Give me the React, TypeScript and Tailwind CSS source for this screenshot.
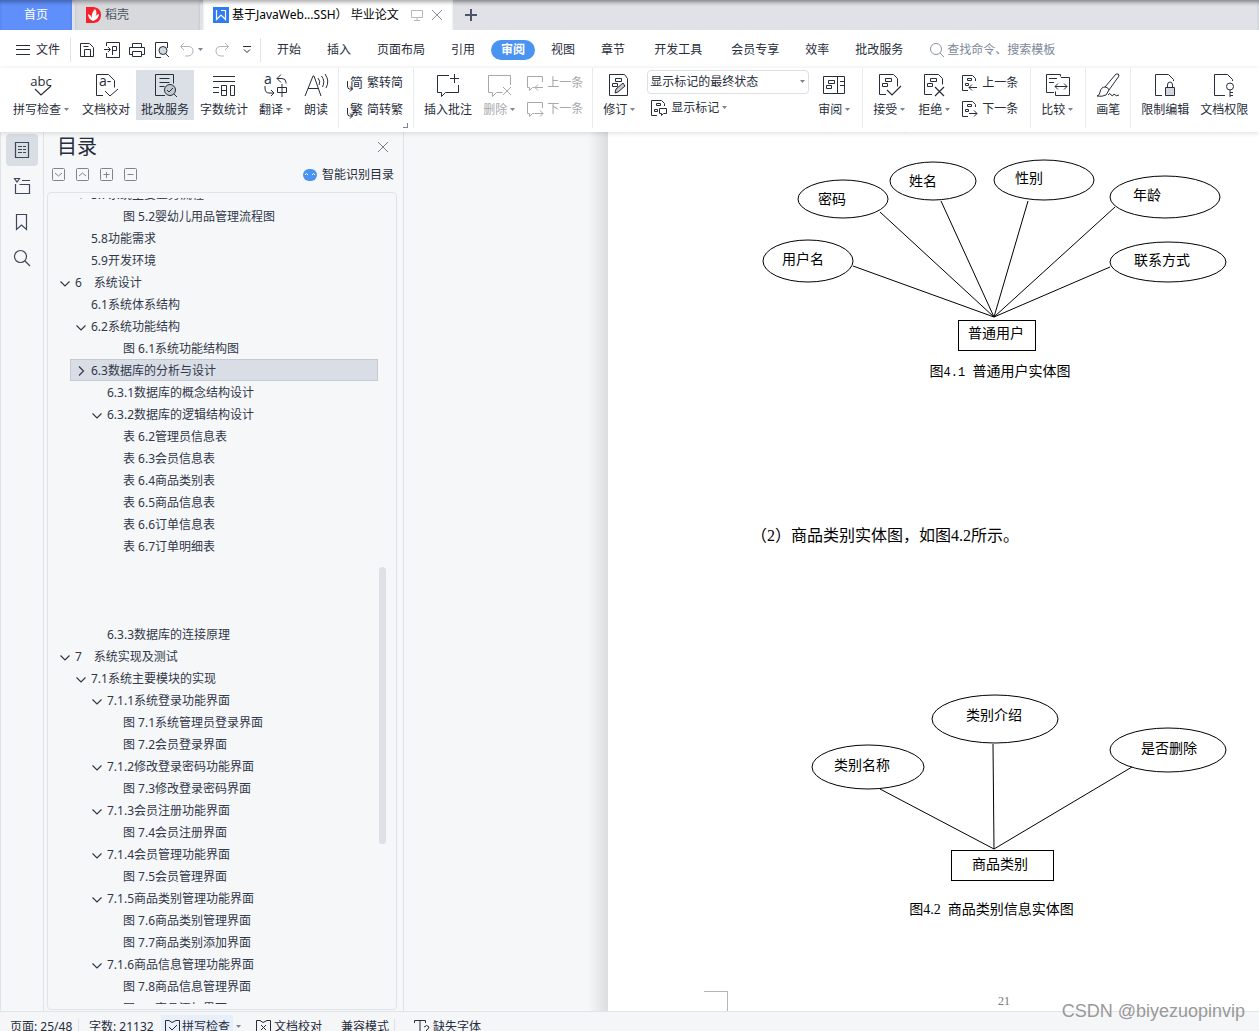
import React from "react";

type P = { children?: React.ReactNode; size?: number; className?: string };

function Ico({ children, size = 24, className = "" }: P) {
  return (
    <svg
      width={size}
      height={size}
      viewBox={`0 0 ${size} ${size}`}
      fill="none"
      stroke="currentColor"
      strokeWidth="1"
      aria-hidden="true"
      className={`shrink-0 overflow-visible ${className}`}
    >
      {children}
    </svg>
  );
}

const glyph = { fill: "currentColor", stroke: "none", fontFamily: '"Open Sans","Noto Sans CJK SC",sans-serif' };

const Spell = () => (
  <Ico>
    <text x="11" y="13" fontSize="13" textAnchor="middle" {...glyph}>abc</text>
    <path d="M5 16l6 6 10-9" strokeWidth="1.2" />
  </Ico>
);
const Proof = () => (
  <Ico>
    <path d="M9 22.500H2.500V1.500h12l6 6v7M11 18l5 5 8-7" />
    <text x="5" y="13" fontSize="14" {...glyph}>a-</text>
  </Ico>
);
const Correct = () => (
  <Ico>
    <path d="M12 22.500H2.500V1.500h18v9M6.500 5.500h10M6.500 9.500h10M6.500 13.500h5" />
    <circle cx="17" cy="17" r="5.500" fill="#c3c9d1" />
    <path d="M14 17l2 2 4-4M21 21l3 3" />
  </Ico>
);
const Count = () => (
  <Ico>
    <path d="M1 3.500h22M1 8.500h22M1 14.500h6M1 19.500h6M9.500 12.500h5v10h-5zM9.500 17.500h5M18.500 12.500h4v10h-4z" />
  </Ico>
);
const Translate = () => (
  <Ico>
    <text x="0" y="11" fontSize="14" {...glyph}>a</text>
    <path d="M13 5.500h5q4 0 4 4v1M17 1.500l-4 4 4 4M1 13v2q0 5 4 5h5M7 17l3 3-3 3M13.500 14.500h9v5h-9zM18 11v13" />
  </Ico>
);
const Read = () => (
  <Ico>
    <path d="M1 23L9 3h1l7 20M4 15.500h10.500M14 5q3 3 1 7M17.500 3q4 5 1 11M21 1q5 7 1 14" />
  </Ico>
);
const SmallCjk = ({ c }: { c: string }) => (
  <Ico size={16}>
    <text x="3" y="12" fontSize="13" {...glyph}>{c}</text>
    <path d="M.500 6v5q0 3 2 3h3M3 11.500L5.500 14 3 16.500" />
  </Ico>
);
const AddNote = () => (
  <Ico>
    <path d="M13 2.500H1.500v17h4v4l4-4h13V12M18.500 1v9M14 5.500h9" />
  </Ico>
);
const DelNote = () => (
  <Ico>
    <path d="M22.500 12V2.500H.500v17h4v4l4-4h6M15 14l8 8M23 14l-8 8" />
  </Ico>
);
const NoteArrow = ({ next }: { next?: boolean }) => (
  <Ico size={16}>
    <path d="M15.500 7V1.500H.500v11h2v3l3-3h2" />
    <path d={next ? "M8 12.500h8M13 9.500l3 3-3 3" : "M16 12.500H8M11 9.500l-3 3 3 3"} />
  </Ico>
);
const Revise = () => (
  <Ico>
    <path d="M1.500 1.500h15l3 4v17h-18zM7.500 5.500h6v3h-6zM4.500 10.500h5v3h-5z" />
    <path d="M7 20l1-4 7-6 2 3-7 6z" fill="#c3c9d1" />
  </Ico>
);
const ShowMarks = () => (
  <Ico size={16}>
    <path d="M6 15.500H.500V.500h10l3 3V6M5.500 3.500h4v2h-4zM3.500 9.500h3v2h-3zM8.500 8.500h7v5h-3l-2 2v-2h-2z" />
  </Ico>
);
const Pane = () => (
  <Ico>
    <path d="M.500 3.500h21v17H.500zM14.500 3.500v17M5.500 7.500h6v3h-6zM3.500 12.500h5v3h-5zM17 8.500h4M17 12.500h4" />
  </Ico>
);
const Accept = () => (
  <Ico>
    <path d="M8 21.500H1.500V1.500h14l4 4v8M7.500 5.500h6v3h-6zM4.500 10.500h5v3h-5z" />
    <path d="M9 17l5 5 9-9" strokeWidth="1.2" />
  </Ico>
);
const Reject = () => (
  <Ico>
    <path d="M9 21.500H1.500V1.500h14l4 4v6M7.500 5.500h6v3h-6zM4.500 10.500h5v3h-5z" />
    <path d="M12 14l9 9M21 14l-9 9" strokeWidth="1.2" />
  </Ico>
);
const RevArrow = ({ next }: { next?: boolean }) => (
  <Ico size={16}>
    <path d="M6 15.500H.500V.500h10l3 3V6M5.500 3.500h4v2h-4zM3.500 8.500h3v2h-3z" />
    <path d={next ? "M7 12.500h8M12 9.500l3 3-3 3" : "M15 12.500H7M10 9.500l-3 3 3 3"} />
  </Ico>
);
const Compare = () => (
  <Ico>
    <path d="M8 19.500H.500V1.500h14v2M3 5.500h8M3 9.500h5M15 4.500h8.500v18H9.500v-4M9 13.500h12M12 10.500l-3 3 3 3M18 10.500l3 3-3 3" />
  </Ico>
);
const Pen = () => (
  <Ico>
    <path d="M9 14L20 1q3-1 3 2L13 17M9 14q3 0 4 3l-3 5q-4 2-9 1 3-1 3-4 1-5 5-5zM12 22q2-3 3 0 2 2 3-1 2 3 5 1" />
  </Ico>
);
const Lock = () => (
  <Ico>
    <path d="M9 22.500H2.500V1.500h13l5 5V8" />
    <path d="M12.500 14.500h9v8h-9z" fill="#d3d7dc" />
    <path d="M14.500 14v-2q0-3 2.500-3t2.500 3v2" />
  </Ico>
);
const Key = () => (
  <Ico>
    <path d="M13 22.500H2.500V1.500h13l5 5V8M18 17v7M18 19.500h3M18 22.500h3" />
    <circle cx="18" cy="13.500" r="3.500" />
  </Ico>
);

const Caret = () => (
  <svg width="8" height="6" viewBox="0 0 8 6" aria-hidden="true" className="ml-0.5 shrink-0 fill-[#7b8496]">
    <path d="M1 1h5L3.500 4z" />
  </svg>
);

function Big({ icon, label, caret, active, disabled }: { icon: React.ReactNode; label: string; caret?: boolean; active?: boolean; disabled?: boolean }) {
  return (
    <button
      type="button"
      disabled={disabled}
      className={`flex h-[50px] shrink-0 flex-col items-center gap-[5px] px-[5px] pt-[3px] ${active ? "bg-[#dbe0e6]" : ""} ${disabled ? "text-[#a6a8ac]" : ""}`}
    >
      {icon}
      <span className="flex items-center leading-4">
        {label}
        {caret && <Caret />}
      </span>
    </button>
  );
}

function Small({ icon, label, caret, disabled }: { icon: React.ReactNode; label: string; caret?: boolean; disabled?: boolean }) {
  return (
    <button type="button" disabled={disabled} className={`flex h-[26px] items-center gap-1 whitespace-nowrap ${disabled ? "text-[#a6a8ac]" : ""}`}>
      {icon}
      <span className="flex items-center">
        {label}
        {caret && <Caret />}
      </span>
    </button>
  );
}

const Group = ({ children, className = "px-[5px]" }: P) => (
  <div className={`flex shrink-0 gap-px border-r border-[#e8eaed] pt-0.5 ${className}`}>{children}</div>
);

function TabBar() {
  return (
    <div className="flex h-[30px] shrink-0 bg-[#e1e2e7] shadow-[inset_0_4px_4px_-2px_rgba(0,0,0,0.45)]">
      <button type="button" className="mr-[3px] w-[72px] bg-[#5f8ffa] text-white shadow-[inset_0_4px_4px_-2px_rgba(0,0,0,0.35)]">首页</button>
      <button type="button" className="mr-[3px] flex w-[125px] items-center gap-1 bg-[#d8d9dc] pl-[11px] text-[#4b5160] shadow-[inset_0_4px_4px_-2px_rgba(0,0,0,0.35)]">
        <svg width="15" height="16" viewBox="0 0 15 16" aria-hidden="true">
          <path d="M0 0h8q7 1 7 8t-7 8H0z" fill="#f5222d" />
          <path d="M7 14Q2 12 2 7q3 1 4 4Q5 6 9 2q3 4 0 8 2-3 4-3 0 5-6 7z" fill="#fff" />
        </svg>
        稻壳
      </button>
      <div className="flex w-[250px] items-center bg-white pl-[10px] text-black shadow-[inset_0_4px_4px_-2px_rgba(0,0,0,0.35)]">
        <svg width="16" height="16" viewBox="0 0 16 16" aria-hidden="true" className="mr-[3px] shrink-0">
          <rect width="16" height="16" fill="#2f7bf0" />
          <path d="M3.500 3v9.500L8 8l4.500 4.500v-9H8" fill="none" stroke="#fff" strokeWidth="1.200" />
        </svg>
        <span className="w-[175px] shrink-0 whitespace-pre">基于JavaWeb...SSH） 毕业论文</span>
        <Ico size={12} className="ml-1 text-[#b3b8c4]"><path d="M.500 1.500h11v7H.500zM6 8v3M3 11.500h6" /></Ico>
        <button type="button" aria-label="关闭标签" className="ml-2 text-[#8b93a3]"><Ico size={12}><path d="M1 1l10 10M11 1L1 11" /></Ico></button>
      </div>
      <button type="button" aria-label="新建标签" className="ml-3 text-[#4b566d]">
        <Ico size={12}><path d="M6 0v12M0 6h12" strokeWidth="2" /></Ico>
      </button>
    </div>
  );
}

const menus = [
  ["开始", ""], ["插入", ""], ["页面布局", ""], ["引用", ""], ["审阅", "on"], ["视图", ""], ["章节", "gap"],
  ["开发工具", "gap"], ["会员专享", ""], ["效率", ""], ["批改服务", ""],
];

function MenuBar() {
  return (
    <div className="flex h-[38px] shrink-0 items-center bg-white pt-0.5">
      <button type="button" className="flex items-center gap-1.5 pl-4">
        <Ico size={14}><path d="M0 2.500h14M0 6.500h14M0 11.500h14" /></Ico>
        文件
      </button>
      <div className="ml-[10px] h-6 w-px bg-[#dfe2e6]" />
      <div className="ml-2 flex items-center gap-[9px]">
        <button type="button" aria-label="保存"><Ico size={16}><path d="M1.500 1.500h9l4 4v9h-13zM5.500 14.500V7.500h6v7M4.500 4.500h5" /></Ico></button>
        <button type="button" aria-label="输出为PDF"><Ico size={16}><path d="M2.500 4V.500h13v15h-13V11M0 7.500h6M4 5l2.500 2.500L4 10M8.500 13V4.500h4v4h-4" /></Ico></button>
        <button type="button" aria-label="打印"><Ico size={16}><path d="M3.500 5V1.500h9V5M3.500 12.500h-3v-7h15v7h-3M3.500 9.500h9v5h-9z" /></Ico></button>
        <button type="button" aria-label="打印预览"><Ico size={16}><path d="M7 15.500H1.500V.500h12V6" /><circle cx="9" cy="8.500" r="4" fill="#d3d8de" /><path d="M12 12l3 3" /></Ico></button>
        <button type="button" aria-label="撤销" className="flex items-center text-[#b3b5b9]"><Ico size={16}><path d="M5 1L1.500 4.500 5 8M2 4.500h7q5 0 5 4.500t-5 5H6" /></Ico><Caret /></button>
        <button type="button" aria-label="恢复" className="text-[#b3b5b9]"><Ico size={16}><path d="M11 1l3.500 3.500L11 8M14 4.500H7Q2 4.500 2 9t5 5h3" /></Ico></button>
        <button type="button" aria-label="更多快捷工具"><Ico size={16}><path d="M4 4.500h8M5 7.500l3 3 3-3" /></Ico></button>
      </div>
      <div className="ml-[5px] h-6 w-px bg-[#dfe2e6]" />
      <nav className="ml-[3px] flex items-center">
        {menus.map(([m, k]) =>
          k === "on" ? (
            <button key={m} type="button" className="mx-[3px] h-5 rounded-full bg-[#4a93f0] px-2.5 font-bold text-white">{m}</button>
          ) : (
            <button key={m} type="button" className={k === "gap" ? "mr-[3px] px-[13px]" : "px-[13px]"}>{m}</button>
          )
        )}
      </nav>
      <label className="ml-[13px] flex min-w-0 items-center gap-0.5 text-[#8b94a5]">
        <Ico size={16}><circle cx="7" cy="7" r="5.500" /><path d="M11 11l4 4" /></Ico>
        <input aria-label="查找命令、搜索模板" placeholder="查找命令、搜索模板" className="w-32 min-w-0 bg-transparent outline-none placeholder:text-[#7d8799]" />
      </label>
    </div>
  );
}

function Ribbon() {
  return (
    <div className="relative z-10 flex h-16 shrink-0 bg-white pb-1 shadow-[0_1px_5px_rgba(0,0,0,0.14)]">
      <Group className="pl-2 pr-[5px]">
        <Big icon={<Spell />} label="拼写检查" caret />
        <Big icon={<Proof />} label="文档校对" />
        <Big icon={<Correct />} label="批改服务" active />
        <Big icon={<Count />} label="字数统计" />
        <Big icon={<Translate />} label="翻译" caret />
        <Big icon={<Read />} label="朗读" />
      </Group>
      <Group className="relative flex-col pl-2 pr-[10px]">
        <Small icon={<SmallCjk c="简" />} label="繁转简" />
        <Small icon={<SmallCjk c="繁" />} label="简转繁" />
        <span className="absolute bottom-0 right-[5px] size-[5px] border-b border-r border-[#7b8496]" />
      </Group>
      <Group className="pl-[5px] pr-[9px]">
        <Big icon={<AddNote />} label="插入批注" />
        <Big icon={<DelNote />} label="删除" caret disabled />
        <div className="ml-1 flex flex-col">
          <Small icon={<NoteArrow />} label="上一条" disabled />
          <Small icon={<NoteArrow next />} label="下一条" disabled />
        </div>
      </Group>
      <Group>
        <Big icon={<Revise />} label="修订" caret />
        <div className="ml-1 mr-[3px] flex w-[162px] flex-col gap-px">
          <div className="relative">
            <select aria-label="显示状态" className="h-6 w-full appearance-none rounded-sm border border-[#dcdfe4] bg-white pl-0.5 outline-none">
              <option>显示标记的最终状态</option>
            </select>
            <span className="pointer-events-none absolute right-0.5 top-[9px]"><Caret /></span>
          </div>
          <div className="pl-1"><Small icon={<ShowMarks />} label="显示标记" caret /></div>
        </div>
        <Big icon={<Pane />} label="审阅" caret />
      </Group>
      <Group className="pl-[5px] pr-[12px]">
        <Big icon={<Accept />} label="接受" caret />
        <Big icon={<Reject />} label="拒绝" caret />
        <div className="ml-1 flex flex-col">
          <Small icon={<RevArrow />} label="上一条" />
          <Small icon={<RevArrow next />} label="下一条" />
        </div>
      </Group>
      <Group><Big icon={<Compare />} label="比较" caret /></Group>
      <Group><Big icon={<Pen />} label="画笔" /></Group>
      <div className="flex gap-px pl-[5px] pt-0.5">
        <Big icon={<Lock />} label="限制编辑" />
        <Big icon={<Key />} label="文档权限" />
      </div>
    </div>
  );
}

function Rail() {
  return (
    <aside className="flex w-11 shrink-0 flex-col items-center gap-1 border-x border-[#e0e3e8] pt-0.5 text-[#3d475c]">
      <button type="button" aria-label="目录" className="flex size-8 items-center justify-center rounded-sm bg-[#d9dde4]">
        <Ico size={16}><path d="M1.500.500h13v15h-13zM4 4.500h4M9 4.500h3M4 7.500h4M9 7.500h3M4 10.500h4M9 10.500h3" strokeWidth="1.2" /></Ico>
      </button>
      <button type="button" aria-label="章节导航" className="flex size-8 items-center justify-center">
        <Ico size={16}><path d="M.500.500h5L3 4zM8 2.500h8M1.500 6v9.500h14v-9H5.500" strokeWidth="1.2" /></Ico>
      </button>
      <button type="button" aria-label="书签" className="flex size-8 items-center justify-center">
        <Ico size={16}><path d="M2.500.500h10v15L7.500 11l-5 4.500z" strokeWidth="1.2" /></Ico>
      </button>
      <button type="button" aria-label="查找" className="flex size-8 items-center justify-center">
        <Ico size={18}><circle cx="7.500" cy="7.500" r="6" strokeWidth="1.2" /><path d="M12 12l5 5" strokeWidth="1.2" /></Ico>
      </button>
    </aside>
  );
}

type Row = { l: number; t: string; open?: boolean; sel?: boolean };
const rows: Row[] = [
  { l: 2, t: "5.7系统主要业务流程", open: true },
  { l: 4, t: "图 5.2婴幼儿用品管理流程图" },
  { l: 2, t: "5.8功能需求" },
  { l: 2, t: "5.9开发环境" },
  { l: 1, t: "6\u2003系统设计", open: true },
  { l: 2, t: "6.1系统体系结构" },
  { l: 2, t: "6.2系统功能结构", open: true },
  { l: 4, t: "图 6.1系统功能结构图" },
  { l: 2, t: "6.3数据库的分析与设计", sel: true },
  { l: 3, t: "6.3.1数据库的概念结构设计" },
  { l: 3, t: "6.3.2数据库的逻辑结构设计", open: true },
  { l: 4, t: "表 6.2管理员信息表" },
  { l: 4, t: "表 6.3会员信息表" },
  { l: 4, t: "表 6.4商品类别表" },
  { l: 4, t: "表 6.5商品信息表" },
  { l: 4, t: "表 6.6订单信息表" },
  { l: 4, t: "表 6.7订单明细表" },
  { l: 4, t: "" },
  { l: 4, t: "" },
  { l: 4, t: "" },
  { l: 3, t: "6.3.3数据库的连接原理" },
  { l: 1, t: "7\u2003系统实现及测试", open: true },
  { l: 2, t: "7.1系统主要模块的实现", open: true },
  { l: 3, t: "7.1.1系统登录功能界面", open: true },
  { l: 4, t: "图 7.1系统管理员登录界面" },
  { l: 4, t: "图 7.2会员登录界面" },
  { l: 3, t: "7.1.2修改登录密码功能界面", open: true },
  { l: 4, t: "图 7.3修改登录密码界面" },
  { l: 3, t: "7.1.3会员注册功能界面", open: true },
  { l: 4, t: "图 7.4会员注册界面" },
  { l: 3, t: "7.1.4会员管理功能界面", open: true },
  { l: 4, t: "图 7.5会员管理界面" },
  { l: 3, t: "7.1.5商品类别管理功能界面", open: true },
  { l: 4, t: "图 7.6商品类别管理界面" },
  { l: 4, t: "图 7.7商品类别添加界面" },
  { l: 3, t: "7.1.6商品信息管理功能界面", open: true },
  { l: 4, t: "图 7.8商品信息管理界面" },
  { l: 4, t: "图 7.9商品添加界面" },
];
const indent = ["", "pl-[11px]", "pl-[27px]", "pl-[43px]", "pl-[59px]"];
const selIndent = "ml-[22px] mr-[18px] border border-[#c5cbd5] bg-[#d9dde5] pl-1";

function Outline() {
  return (
    <section className="flex w-[360px] shrink-0 flex-col border-r border-[#e0e3e8] pl-[3px] pr-[6px]">
      <div className="flex h-[30px] items-center justify-between pl-[10px] pr-2">
        <h2 className="text-[20px] leading-[30px] text-[#272d3b]">目录</h2>
        <button type="button" aria-label="关闭目录" className="text-[#7a7f8a]"><Ico size={12}><path d="M1 1l10 10M11 1L1 11" /></Ico></button>
      </div>
      <div className="flex h-[30px] items-center justify-between pb-1.5 pl-[3px] pr-[3px]">
        <div className="flex gap-2 text-[#7f848c]">
          {[["展开", "M5 7l3.500 3L12 7"], ["收起", "M5 10l3.500-3L12 10"], ["全部展开", "M8.500 6v6M5.500 8.500h6"], ["全部收起", "M5.500 8.500h6"]].map(([n, d]) => (
            <button key={n} type="button" aria-label={n}><Ico size={16}><rect x="2.500" y="2.500" width="12" height="12" rx="1" /><path d={d} /></Ico></button>
          ))}
        </div>
        <button type="button" className="flex items-center gap-[5px] pt-0.5">
          <svg width="14" height="14" viewBox="0 0 14 14" aria-hidden="true">
            <rect x="0" y="1" width="14" height="12" rx="6" fill="#4a93f0" />
            <path d="M2 7q1.500-3 3 0M9 7q1.500-3 3 0" stroke="#fff" fill="none" />
          </svg>
          智能识别目录
        </button>
      </div>
      <div className="relative mb-px min-h-0 flex-1 rounded-sm border border-[#e0e3e8] py-[5px]">
        <ul className="h-full overflow-hidden">
          {rows.map((r, i) => (
            <li key={i} className={`flex h-[22px] items-center whitespace-pre pt-0.5 text-[#313849] ${i === 0 ? "-mt-[15px]" : ""} ${r.sel ? selIndent : indent[r.l]}`}>
              <span className="flex w-4 shrink-0 items-center">
                {r.open && <Ico size={12}><path d="M1.500 4.500L6 9l4.500-4.500" strokeWidth="1.2" /></Ico>}
                {r.sel && <Ico size={12}><path d="M4 1.500L8.500 6 4 10.500" strokeWidth="1.2" /></Ico>}
              </span>
              {r.t}
            </li>
          ))}
        </ul>
        <div className="absolute right-[10px] top-[374px] h-[277px] w-[7px] rounded-full bg-[#dde0e4]" />
      </div>
    </section>
  );
}

type Node = { cx: number; cy: number; rx: number; ry: number; t: string; tx: number; ty: number };
const userNodes: Node[] = [
  { cx: 58, cy: 110, rx: 45, ry: 21, t: "用户名", tx: 53, ty: 113 },
  { cx: 93, cy: 48, rx: 45, ry: 19, t: "密码", tx: 82, ty: 53 },
  { cx: 183, cy: 30, rx: 43, ry: 19, t: "姓名", tx: 173, ty: 35 },
  { cx: 294, cy: 29, rx: 50, ry: 20, t: "性别", tx: 279, ty: 32 },
  { cx: 415, cy: 46, rx: 55, ry: 21, t: "年龄", tx: 397, ty: 49 },
  { cx: 418, cy: 111, rx: 58, ry: 20, t: "联系方式", tx: 412, ty: 114 },
];
const goodsNodes: Node[] = [
  { cx: 118, cy: 76, rx: 56, ry: 22, t: "类别名称", tx: 112, ty: 79 },
  { cx: 245, cy: 28, rx: 63, ry: 24, t: "类别介绍", tx: 244, ty: 29 },
  { cx: 418, cy: 59, rx: 58, ry: 22, t: "是否删除", tx: 419, ty: 62 },
];

function Diagram({ nodes, lines, box, label, h, title }: { nodes: Node[]; lines: string; box: number[]; label: number[]; h: number; title: string }) {
  return (
    <svg width="500" height={h} viewBox={`0 0 500 ${h}`} role="img" aria-label={title} fill="none" stroke="#000" strokeWidth="1" className="text-[14px]">
      <path d={lines} />
      {nodes.map((n) => (
        <g key={n.t}>
          <ellipse cx={n.cx} cy={n.cy} rx={n.rx} ry={n.ry} />
          <text x={n.tx} y={n.ty} textAnchor="middle" fill="#000" stroke="none">{n.t}</text>
        </g>
      ))}
      <rect x={box[0]} y={box[1]} width={box[2]} height={box[3]} shapeRendering="crispEdges" />
      <text x={label[0]} y={label[1]} textAnchor="middle" fill="#000" stroke="none">{title}</text>
    </svg>
  );
}

function Doc() {
  return (
    <main className="flex min-w-0 flex-1">
      <div className="w-[204px] shrink-0 bg-[linear-gradient(to_right,transparent_184px,#dcdddf)]" />
      <article className="min-w-0 flex-1 overflow-hidden bg-white font-['Liberation_Serif','Noto_Sans_CJK_SC',serif] text-black">
        <div className="flex h-full w-[642px] flex-col pl-[142px]">
          <p className="-mt-[19px] h-[20px] shrink-0 pl-px text-[16px] leading-6">（1）普通用户实体图，如图4.1所示。</p>
          <figure className="mt-[18px] shrink-0">
            <Diagram
              nodes={userNodes}
              lines="M103 115L244 166L130 61M191 50L244 166L278 50M365 56L244 166L360 116"
              box={[208, 169, 77, 30]}
              label={[246, 187]}
              h={208}
              title="普通用户"
            />
            <figcaption className="w-[500px] pt-px text-center text-[14px] leading-6">
              图<span className="whitespace-pre font-['Liberation_Mono',monospace] text-[12px]">4.1 </span>普通用户实体图
            </figcaption>
          </figure>
          <p className="mt-[139px] shrink-0 pl-px text-[16px] leading-6">（2）商品类别实体图，如图4.2所示。</p>
          <figure className="mt-[143px] shrink-0">
            <Diagram
              nodes={goodsNodes}
              lines="M130 98L244 158L243 53M244 158L382 76"
              box={[201, 159, 102, 30]}
              label={[250, 178]}
              h={207}
              title="商品类别"
            />
            <figcaption className="w-[483px] whitespace-pre text-center text-[14px] leading-6">图4.2  商品类别信息实体图</figcaption>
          </figure>
          <footer className="mt-auto flex h-5 items-center text-[12px] text-[#777]">
            <span className="-ml-[46px] h-5 w-6 border-r border-t border-[#b5b5b5]" />
            <span className="ml-[270px]">21</span>
          </footer>
        </div>
      </article>
    </main>
  );
}

function StatusBar() {
  return (
    <footer className="h-5 shrink-0 overflow-hidden border-t border-[#e0e3e8] bg-[#f5f6f8]">
      <div className="flex h-[30px] items-center">
        <span className="ml-[10px] w-[69px] border-r border-[#dfe2e6]">页面: 25/48</span>
        <span className="ml-[10px] w-[72px] whitespace-nowrap">字数: 21132</span>
        <button type="button" className="flex h-6 items-center gap-0.5 bg-[#e8effa] px-[3px]">
          <Ico size={16}><path d="M5 1.500H1.500v13h14v-13H12M5 1.500l3 2 4-2M5 8l3 3 5-5" /></Ico>拼写检查
        </button>
        <Caret />
        <button type="button" className="ml-3 flex items-center gap-[3px]">
          <Ico size={16}><path d="M5 1.500H1.500v13h14v-13H12M5 1.500l3 2 4-2M6 6l5 5M11 6l-5 5" /></Ico>文档校对
        </button>
        <span className="ml-[19px] border-r border-[#dfe2e6] pr-[5px]">兼容模式</span>
        <button type="button" className="ml-[19px] flex items-center gap-[3px]">
          <Ico size={16}><path d="M.500 4V1.500h11V4M6 1.500v12M4 13.500h4M10 8q3-3 5 0 0 2-2.500 3v2M12.500 14v1.500" /></Ico>缺失字体
        </button>
      </div>
    </footer>
  );
}

export default function App() {
  return (
    <div className="relative flex h-screen flex-col overflow-hidden bg-[#f6f7f9] font-['Noto_Sans','Noto_Sans_CJK_SC',sans-serif] text-[12px] leading-4 text-[#272d3b]">
      <TabBar />
      <MenuBar />
      <Ribbon />
      <div className="flex min-h-0 flex-1">
        <Rail />
        <Outline />
        <Doc />
      </div>
      <StatusBar />
      <div className="pointer-events-none absolute bottom-2 right-[14px] font-['Liberation_Sans',sans-serif] text-[18px] leading-6 text-[#999]">CSDN @biyezuopinvip</div>
    </div>
  );
}
